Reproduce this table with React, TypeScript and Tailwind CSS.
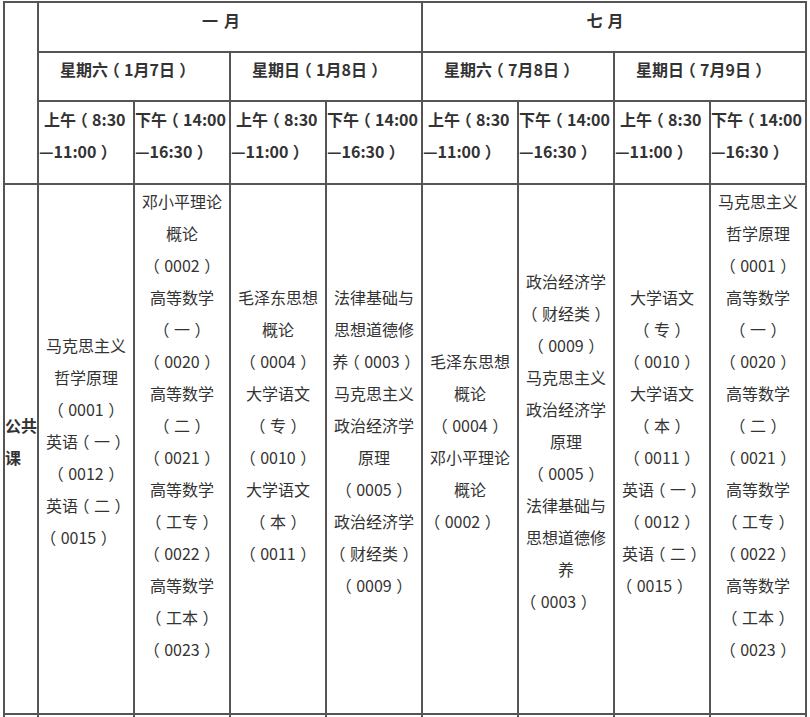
import React from "react";

type Line = { t: string; shift?: boolean };

const cols: Line[][] = [
  [
    { t: "马克思主义" },
    { t: "哲学原理" },
    { t: "（0001）" },
    { t: "英语（一）" },
    { t: "（0012）" },
    { t: "英语（二）" },
    { t: "（0015）", shift: true },
  ],
  [
    { t: "邓小平理论" },
    { t: "概论" },
    { t: "（0002）" },
    { t: "高等数学" },
    { t: "（一）" },
    { t: "（0020）" },
    { t: "高等数学" },
    { t: "（二）" },
    { t: "（0021）" },
    { t: "高等数学" },
    { t: "（工专）" },
    { t: "（0022）" },
    { t: "高等数学" },
    { t: "（工本）" },
    { t: "（0023）" },
    { t: "" },
  ],
  [
    { t: "毛泽东思想" },
    { t: "概论" },
    { t: "（0004）" },
    { t: "大学语文" },
    { t: "（专）" },
    { t: "（0010）" },
    { t: "大学语文" },
    { t: "（本）" },
    { t: "（0011）" },
    { t: "" },
  ],
  [
    { t: "法律基础与" },
    { t: "思想道德修" },
    { t: "养（0003）" },
    { t: "马克思主义" },
    { t: "政治经济学" },
    { t: "原理" },
    { t: "（0005）" },
    { t: "政治经济学" },
    { t: "（财经类）" },
    { t: "（0009）" },
  ],
  [
    { t: "毛泽东思想" },
    { t: "概论" },
    { t: "（0004）" },
    { t: "邓小平理论" },
    { t: "概论" },
    { t: "（0002）", shift: true },
  ],
  [
    { t: "政治经济学" },
    { t: "（财经类）" },
    { t: "（0009）" },
    { t: "马克思主义" },
    { t: "政治经济学" },
    { t: "原理" },
    { t: "（0005）" },
    { t: "法律基础与" },
    { t: "思想道德修" },
    { t: "养" },
    { t: "（0003）", shift: true },
  ],
  [
    { t: "大学语文" },
    { t: "（专）" },
    { t: "（0010）" },
    { t: "大学语文" },
    { t: "（本）" },
    { t: "（0011）" },
    { t: "英语（一）" },
    { t: "（0012）" },
    { t: "英语（二）" },
    { t: "（0015）", shift: true },
  ],
  [
    { t: "马克思主义" },
    { t: "哲学原理" },
    { t: "（0001）" },
    { t: "高等数学" },
    { t: "（一）" },
    { t: "（0020）" },
    { t: "高等数学" },
    { t: "（二）" },
    { t: "（0021）" },
    { t: "高等数学" },
    { t: "（工专）" },
    { t: "（0022）" },
    { t: "高等数学" },
    { t: "（工本）" },
    { t: "（0023）" },
    { t: "" },
  ],
];

// Full-width parentheses: proportional glyph placed inside a 1em box,
// like the reference font draws them.
function P({ text }: { text: string }) {
  const parts = text.split(/([（）])/);
  return (
    <>
      {parts.map((p, i) =>
        p === "（" ? (
          <span key={i} className="inline-block w-[16px] pl-[3px] text-left [font-feature-settings:'palt']">
            （
          </span>
        ) : p === "）" ? (
          <span key={i} className="inline-block w-[16px] pl-[5px] text-left [font-feature-settings:'palt']">
            ）
          </span>
        ) : (
          <React.Fragment key={i}>{p}</React.Fragment>
        )
      )}
    </>
  );
}

const cell = "border-r-2 border-b-2 border-[#555]";

const days = ["星期六（1月7日）", "星期日（1月8日）", "星期六（7月8日）", "星期日（7月9日）"];

export default function App() {
  return (
    <div
      className="bg-white min-h-[717px] text-[#333] text-[16px] leading-[32px]"
      style={{ fontFamily: '"Noto Sans CJK SC", "Noto Sans", sans-serif' }}
    >
      <div className="ml-[3px] pt-[1px]">
        <div className="grid w-max grid-cols-[34px_repeat(8,96px)] grid-rows-[50px_49px_83px_530px_40px] border-l-2 border-t-2 border-[#555]">
          {/* corner cell */}
          <div className={`${cell} row-span-3`} />
          {/* months */}
          <div className={`${cell} col-span-4 flex justify-center pt-[1px] pr-[18px] font-bold`}>
            <span>一</span>
            <span className="inline-block w-[6px]" />
            <span>月</span>
          </div>
          <div className={`${cell} col-span-4 flex justify-center pt-[1px] pr-[18px] font-bold`}>
            <span>七</span>
            <span className="inline-block w-[5px]" />
            <span>月</span>
          </div>
          {/* days */}
          {days.map((d) => (
            <div key={d} className={`${cell} col-span-2 pl-[21px] font-bold whitespace-nowrap`}>
              <P text={d} />
            </div>
          ))}
          {/* times */}
          {[0, 1, 2, 3].map((i) => (
            <React.Fragment key={i}>
              <div className={`${cell} pt-[1px] font-bold whitespace-nowrap`}>
                <div className="pl-[5px]">
                  <P text="上午（8:30" />
                </div>
                <div>
                  <P text="—11:00）" />
                </div>
              </div>
              <div className={`${cell} pt-[1px] font-bold whitespace-nowrap`}>
                <div>
                  <P text="下午（14:00" />
                </div>
                <div>
                  <P text="—16:30）" />
                </div>
              </div>
            </React.Fragment>
          ))}
          {/* body */}
          <div className={`${cell} flex items-center pb-[16px] font-bold`}>
            <div>
              <div>公共</div>
              <div>课</div>
            </div>
          </div>
          {cols.map((lines, i) => (
            <div key={i} className={`${cell} flex items-center justify-center pb-[16px]`}>
              <div className="w-full text-center">
                {lines.map((l, j) => (
                  <div key={j} className={`h-[32px] whitespace-nowrap ${l.shift ? "pr-[15px]" : ""}`}>
                    <P text={l.t} />
                  </div>
                ))}
              </div>
            </div>
          ))}
          {/* next row (cut off) */}
          {Array.from({ length: 9 }).map((_, i) => (
            <div key={`n${i}`} className={cell} />
          ))}
        </div>
      </div>
    </div>
  );
}
